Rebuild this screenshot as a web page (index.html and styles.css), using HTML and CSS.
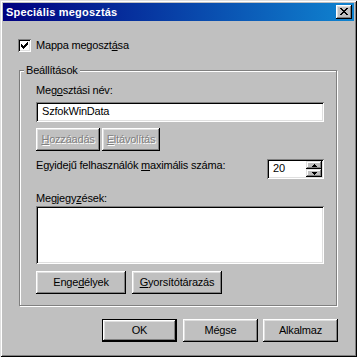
FILE: index.html
```html
<!DOCTYPE html>
<html lang="hu">
<head>
<meta charset="utf-8">
<title>Speciális megosztás</title>
<link rel="stylesheet" href="styles.css">
</head>
<body>
<div class="window">
  <div class="titlebar">
    <span class="title">Speciális megosztás</span>
    <div class="close">
      <svg width="8" height="7" viewBox="0 0 8 7" shape-rendering="crispEdges">
        <path d="M0 0h2v1h-2zM6 0h2v1h-2zM1 1h2v1h-2zM5 1h2v1h-2zM2 2h4v1h-4zM3 3h2v1h-2zM2 4h4v1h-4zM1 5h2v1h-2zM5 5h2v1h-2zM0 6h2v1h-2zM6 6h2v1h-2z" fill="#000"/>
      </svg>
    </div>
  </div>
  <div class="content">
    <div class="check-row">
      <span class="checkbox">
        <svg width="7" height="7" viewBox="0 0 7 7" shape-rendering="crispEdges">
          <path d="M6 0h1v3h-1zM5 1h1v3h-1zM4 2h1v3h-1zM3 3h1v3h-1zM2 4h1v3h-1zM1 3h1v3h-1zM0 2h1v3h-1z" fill="#000"/>
        </svg>
      </span>
      <span class="text">Mappa megoszt<u>á</u>sa</span>
    </div>

    <div class="group">
      <span class="legend">Beállítások</span>
      <div class="label">Meg<u>o</u>sztási név:</div>
      <div class="field textbox">SzfokWinData</div>
      <div class="row row-small">
        <div class="btn disabled w-add"><span><u>H</u>ozzáadás</span></div>
        <div class="btn disabled w-remove"><span><u>E</u>ltávolítás</span></div>
      </div>
      <div class="limit-row">
        <span class="text">Egyidejű felhasználók <u>m</u>aximális száma:</span>
        <div class="field spinner">
          <span class="spin-value">20</span>
          <div class="spin-buttons">
            <div class="spin-btn">
              <svg width="5" height="3" viewBox="0 0 5 3" shape-rendering="crispEdges"><path d="M2 0h1v1h1v1h1v1h-5v-1h1v-1h1z" fill="#000"/></svg>
            </div>
            <div class="spin-btn">
              <svg width="5" height="3" viewBox="0 0 5 3" shape-rendering="crispEdges"><path d="M0 0h5v1h-1v1h-1v1h-1v-1h-1v-1h-1z" fill="#000"/></svg>
            </div>
          </div>
        </div>
      </div>
      <div class="label label-notes">Megjegy<u>z</u>ések:</div>
      <div class="field textarea"></div>
      <div class="row row-wide">
        <div class="btn w-90">Enge<u>d</u>élyek</div>
        <div class="btn w-90"><u>G</u>yorsítótárazás</div>
      </div>
    </div>

    <div class="footer">
      <div class="btn default w-75">OK</div>
      <div class="btn w-75">Mégse</div>
      <div class="btn w-75">Alkalmaz</div>
    </div>
  </div>
</div>
</body>
</html>
```

FILE: styles.css
```css
* { box-sizing: border-box; }

html, body {
  margin: 0;
  padding: 0;
  background: #c0c0c0;
}

body {
  font-family: "Liberation Sans", Arial, sans-serif;
  font-size: 11px;
  line-height: 13px;
  letter-spacing: -0.2px;
  color: #000;
}

u { text-decoration: underline; text-underline-offset: 1px; }

.window {
  width: 357px;
  height: 357px;
  padding: 3px;
  background: #c0c0c0;
  box-shadow:
    inset 1px 1px #dfdfdf,
    inset -1px -1px #000,
    inset 2px 2px #fff,
    inset -2px -2px #808080;
  display: flex;
  flex-direction: column;
}

.titlebar {
  height: 18px;
  background: linear-gradient(to right, #000080, #1084d0);
  display: flex;
  align-items: center;
  justify-content: space-between;
  padding: 0 2px 0 3px;
}

.title {
  color: #fff;
  font-weight: bold;
  font-size: 11px;
  letter-spacing: 0.2px;
}

.close {
  width: 16px;
  height: 14px;
  background: #c0c0c0;
  box-shadow:
    inset -1px -1px #000,
    inset 1px 1px #fff,
    inset -2px -2px #808080,
    inset 2px 2px #dfdfdf;
  display: flex;
  align-items: center;
  justify-content: center;
  padding: 0 1px 1px 0;
}

.close svg { display: block; }

.content {
  display: flex;
  flex-direction: column;
  padding: 18px 16px 0 16px;
}

.check-row {
  display: flex;
  align-items: center;
  height: 13px;
}

.checkbox {
  width: 13px;
  height: 13px;
  margin-left: -1px;
  margin-right: 5px;
  background: #fff;
  box-shadow:
    inset 1px 1px #808080,
    inset -1px -1px #fff,
    inset 2px 2px #000,
    inset -2px -2px #dfdfdf;
  display: flex;
  align-items: center;
  justify-content: center;
}

.checkbox svg { display: block; }

.group {
  position: relative;
  margin-top: 18px;
  width: 318px;
  border: 1px solid #808080;
  box-shadow: inset 1px 1px #fff, 1px 1px #fff;
  padding: 13px 12px 11px 16px;
  display: flex;
  flex-direction: column;
}

.legend {
  position: absolute;
  top: -7px;
  left: 4px;
  padding: 0 2px;
  background: #c0c0c0;
}

.label { height: 13px; }

.field {
  background: #fff;
  box-shadow:
    inset 1px 1px #808080,
    inset -1px -1px #fff,
    inset 2px 2px #000,
    inset -2px -2px #dfdfdf;
}

.textbox {
  margin-top: 5px;
  height: 20px;
  padding: 3px 5px 0 6px;
}

.row {
  display: flex;
}

.row-small {
  margin-top: 6px;
  gap: 2px;
}

.btn {
  height: 23px;
  background: #c0c0c0;
  box-shadow:
    inset -1px -1px #000,
    inset 1px 1px #fff,
    inset -2px -2px #808080,
    inset 2px 2px #dfdfdf;
  display: flex;
  align-items: center;
  justify-content: center;
  padding-bottom: 1px;
  white-space: nowrap;
}

.btn.disabled {
  color: #808080;
  text-shadow: 1px 1px #fff;
}

.btn.default {
  border: 1px solid #000;
}

.w-add { width: 64px; }
.w-remove { width: 58px; }
.w-90 { width: 90px; }
.w-75 { width: 75px; }

.limit-row {
  margin-top: 8px;
  display: flex;
  justify-content: space-between;
  align-items: flex-start;
}

.spinner {
  width: 57px;
  height: 20px;
  display: flex;
  justify-content: space-between;
  padding: 2px;
}

.spin-value {
  padding: 1px 0 0 4px;
}

.spin-buttons {
  display: flex;
  flex-direction: column;
  width: 16px;
}

.spin-btn {
  height: 8px;
  background: #c0c0c0;
  box-shadow:
    inset -1px -1px #000,
    inset 1px 1px #dfdfdf,
    inset -2px -2px #808080,
    inset 2px 2px #fff;
  display: flex;
  align-items: center;
  justify-content: center;
}

.spin-btn svg { display: block; }

.label-notes { margin-top: 13px; }

.textarea {
  margin-top: 1px;
  height: 58px;
}

.row-wide {
  margin-top: 7px;
  gap: 6px;
}

.footer {
  margin-top: 13px;
  display: flex;
  justify-content: flex-end;
  gap: 5px;
}

.footer .default { margin-right: 1px; }
```
